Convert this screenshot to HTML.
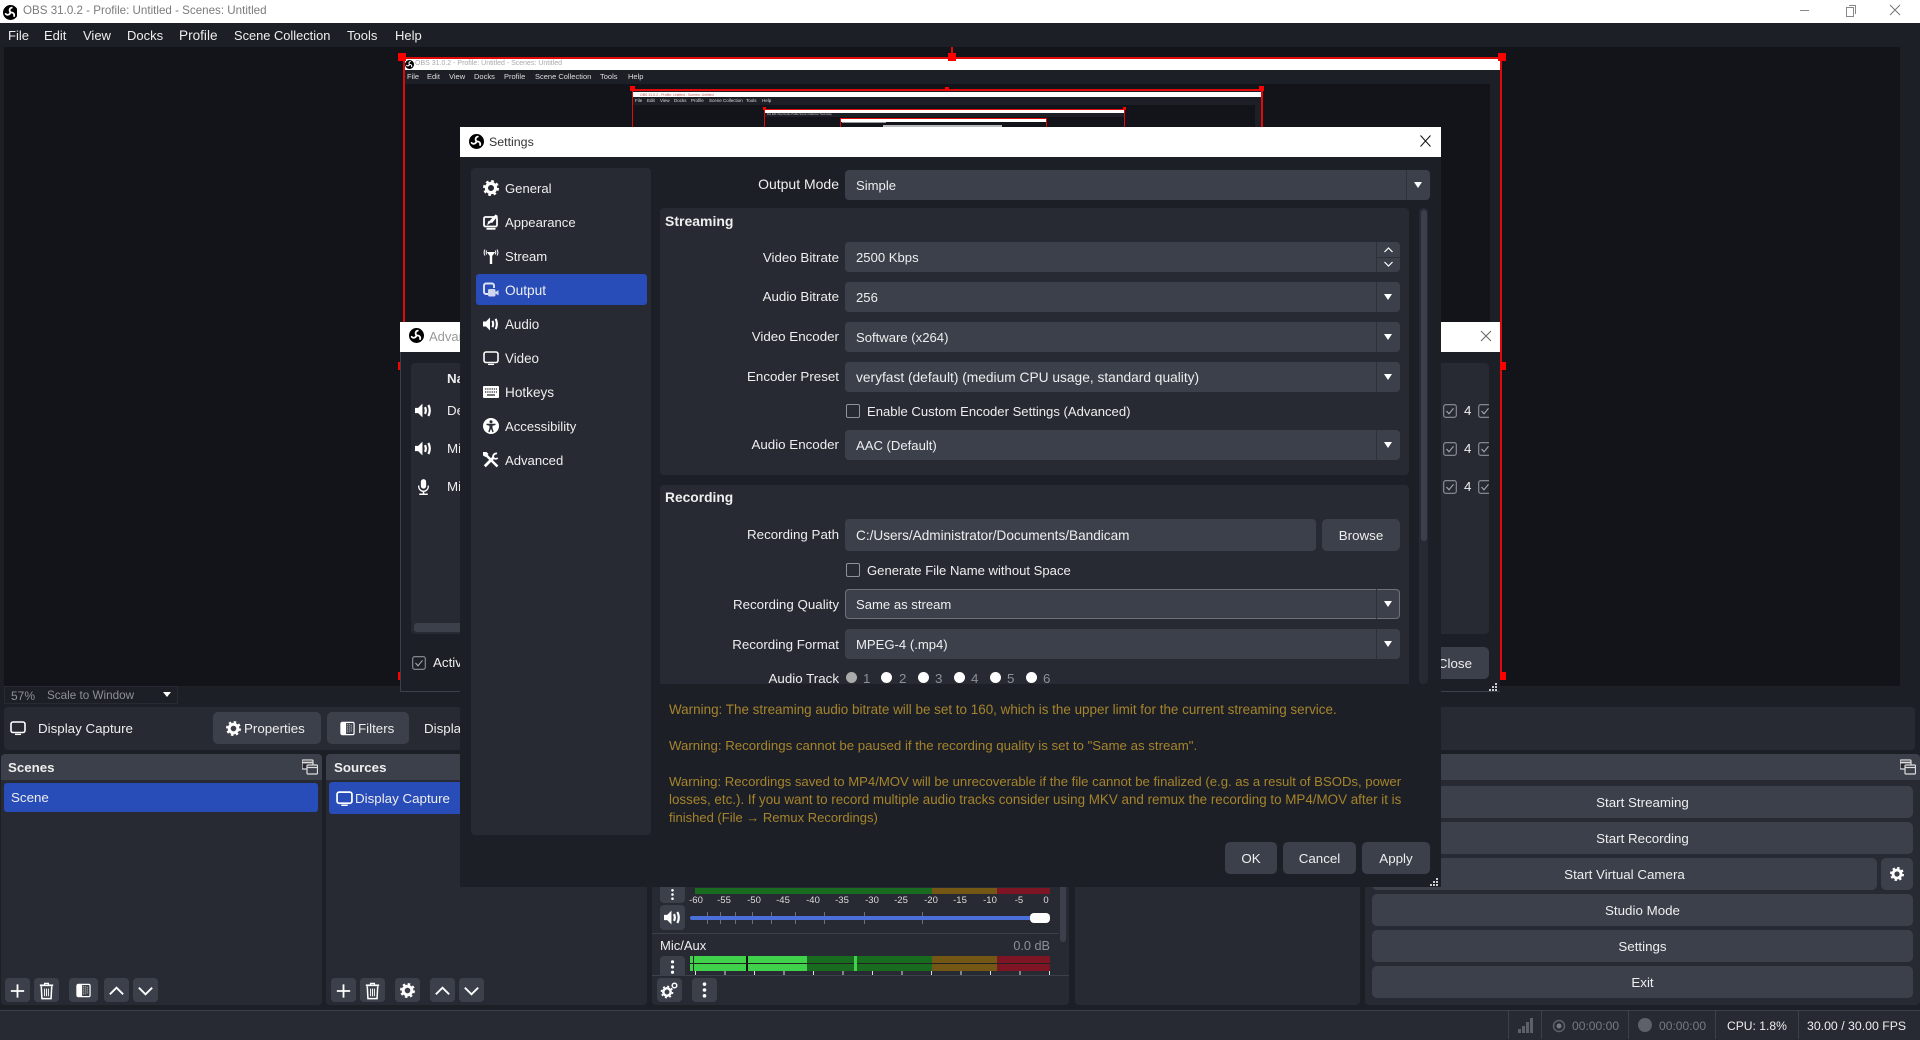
<!DOCTYPE html>
<html><head><meta charset="utf-8"><title>OBS</title>
<style>
html,body{margin:0;padding:0;width:1920px;height:1039px;overflow:hidden;background:#1d1f26;font-family:"Liberation Sans",sans-serif;font-size:13.35px;color:#eee}
div,span,svg{position:absolute}
.t{position:absolute;white-space:nowrap;line-height:18px;height:18px}
.r{text-align:right;right:1081px;margin-top:1px}
.b{font-weight:bold}
.p{background:#272a33;border-radius:4px}
.btn{background:#3c404b;border-radius:5px;text-align:center;line-height:33px;height:32px;white-space:nowrap}
.c{background:#3c404b;border-radius:4px;height:30px;left:845px;width:555px;line-height:30px;font-size:13.1px}
.c span{left:11px;top:1px;white-space:nowrap}
.c b{position:absolute;right:0;top:0;bottom:0;width:23px;border-left:1px solid #2e313a}
.c b:after{content:"";position:absolute;left:7px;top:12px;border-left:4.5px solid transparent;border-right:4.5px solid transparent;border-top:6px solid #fff}
.ck{width:12px;height:12px;border:1.5px solid #8f929a;border-radius:2px}
.ib{background:#3c404b;border-radius:4px;width:25px;height:24px;top:978px}
.ib svg{left:3px;top:3px}
.hd{background:#3c404b;border-radius:4px 4px 0 0;height:26px;top:754px}
.red{background:#e00a0a}
.h{background:#ff0000;width:8px;height:8px}
.w{background:#fff}
.sb{top:1010px;width:1px;height:29px;background:#3c404b}
.g{color:#8e9096}
.w1{color:#a5842c;margin-top:1px}
.tk{font-size:9.5px;line-height:10px;height:10px;color:#ddd;transform:translateX(-50%);top:896px;white-space:nowrap}
.tl{width:1px;height:12px;top:912px;background:#6c6f78}
.m{font-size:13px}
.li{font-size:13.1px;margin-top:1px}
.st{font-size:12.1px;margin-top:1px}
.cl{font-size:13.1px;margin-top:1px}
</style></head>
<body>
<svg width="0" height="0" style="position:absolute">
<defs>
<symbol id="logo" viewBox="0 0 16 16"><circle cx="8" cy="8" r="8" fill="#000"/><g fill="none" stroke="#fff" stroke-width="1.900" stroke-linecap="round"><path d="M8 7.800C6.400 6.200 6.800 3.300 9.400 2.800"/><path d="M8 7.800C6.400 6.200 6.800 3.300 9.400 2.800" transform="rotate(120 8 8)"/><path d="M8 7.800C6.400 6.200 6.800 3.300 9.400 2.800" transform="rotate(240 8 8)"/></g></symbol>
<symbol id="gear" viewBox="0 0 16 16"><circle cx="8" cy="8" r="4.6" fill="none" stroke="#fff" stroke-width="3.2"/><circle cx="8" cy="8" r="6.9" fill="none" stroke="#fff" stroke-width="2.2" stroke-dasharray="2.7 2.72"/></symbol>
<symbol id="mon" viewBox="0 0 16 16"><rect x="1" y="2" width="14" height="10.5" rx="2" fill="none" stroke="#fff" stroke-width="1.6"/><path d="M5 14.400h6" stroke="#fff" stroke-width="1.3"/></symbol>
<symbol id="app" viewBox="0 0 16 16"><rect x="1" y="3" width="13" height="9.5" rx="1.5" fill="none" stroke="#fff" stroke-width="1.8"/><path d="M4 11.200l1.500-4.500 3 1.500z" fill="#fff"/><path d="M6 7.500L12.500.5l2.500 1.500L9 9z" fill="#fff"/><path d="M3.500 14.800h9" stroke="#fff" stroke-width="1.8"/></symbol>
<symbol id="ant" viewBox="0 0 16 16"><path d="M3.800 4h8.400L9.200 8V16H6.800V8z" fill="#fff"/><path d="M2 1.500Q.2 4.500 2 7.500M3.700 2.500Q2.700 4.500 3.700 6.500M14 1.500Q15.800 4.500 14 7.500M12.300 2.500Q13.300 4.500 12.300 6.500" fill="none" stroke="#fff" stroke-width="1"/></symbol>
<symbol id="out" viewBox="0 0 16 16"><path d="M6 12H3a2 2 0 0 1-2-2V3.500a2 2 0 0 1 2-2h6a2 2 0 0 1 2 2V6" fill="none" stroke="#dfe4f5" stroke-width="1.900"/><rect x="5" y="7" width="7.500" height="7.500" rx="1.500" fill="#cfd6ee"/><path d="M12.500 10l3-2v5.500l-3-2z" fill="#cfd6ee"/></symbol>
<symbol id="spk" viewBox="0 0 16 16"><path d="M0 5.500h3L7 1.500v13L3 10.500H0z" fill="#fff"/><path d="M9.400 4.800Q11 8 9.400 11.200M12.600 2.800Q15.200 8 12.600 13.200" fill="none" stroke="#fff" stroke-width="2.100"/></symbol>
<symbol id="key" viewBox="0 0 16 16"><rect x="0" y="2" width="16" height="12" rx="1" fill="#fff"/><path d="M2 5h12M2 8h12" stroke="#282a33" stroke-width="1.200" stroke-dasharray="1.300 .9"/><path d="M4 11h8" stroke="#282a33" stroke-width="1.300"/></symbol>
<symbol id="acc" viewBox="0 0 16 16"><circle cx="8" cy="8" r="8" fill="#fff"/><circle cx="8" cy="3.800" r="1.500" fill="#282a33"/><path d="M3.500 5.800h9v1.200l-3 .8v2.200l1.200 3.800-1.200.4L8 10.800l-1.500 3.400-1.200-.4 1.200-3.800V7.800l-3-.8z" fill="#282a33"/></symbol>
<symbol id="tool" viewBox="0 0 16 16"><g fill="none" stroke="#fff"><path d="M1.500 1.500L14.500 14.500" stroke-width="2.600"/><path d="M1.800 14.200L10.500 5.500" stroke-width="2.800"/><path d="M10.300 5.700a3.200 3.200 0 0 1 3.700-4.200M10.300 5.700a3.200 3.200 0 0 0 4.400 .4" stroke-width="1.800"/></g><path d="M0 0h3.500l2 2-3 3-2.500-1.500z" fill="#fff"/></symbol>
<symbol id="mic" viewBox="0 0 16 16"><rect x="5.500" y="1" width="5" height="9" rx="2.500" fill="#fff"/><path d="M3.500 7v1a4.500 4.500 0 0 0 9 0V7" fill="none" stroke="#fff" stroke-width="1.200"/><path d="M8 12.500V15M4 15.300h8" stroke="#fff" stroke-width="1.400"/></symbol>
<symbol id="flt" viewBox="0 0 16 16"><rect x="0" y="1" width="11" height="9" rx="1" fill="#282a33" stroke="#ddd" stroke-width="1.200"/><path d="M0 3.500h11" stroke="#ddd" stroke-width="1.800"/><rect x="5" y="6" width="10.500" height="9" rx="1" fill="#3c404b" stroke="#ddd" stroke-width="1.200"/><path d="M5 8.500h10.500" stroke="#ddd" stroke-width="1.200"/></symbol>
<symbol id="filt" viewBox="0 0 16 16"><rect x="1" y="1.500" width="14" height="13" rx="1.500" fill="none" stroke="#fff" stroke-width="1.300"/><rect x="1.500" y="2" width="5" height="12" fill="#fff"/><path d="M8 3v10M10 3v10M12 4v8" stroke="#bbb" stroke-width="1.200" stroke-dasharray="1 1"/></symbol>
<symbol id="trash" viewBox="0 0 20 20"><path d="M3 4h14" stroke="#fff" stroke-width="1.800"/><path d="M8 3.500V2h4v1.500" stroke="#fff" stroke-width="1.300" fill="none"/><path d="M4.500 5l.7 13h9.600l.7-13" fill="none" stroke="#fff" stroke-width="1.600"/><path d="M8 7.500v8M10 7.500v8M12 7.500v8" stroke="#fff" stroke-width="1"/></symbol>
<symbol id="plus" viewBox="0 0 20 20"><path d="M10 3v14M3 10h14" stroke="#fff" stroke-width="1.900"/></symbol>
<symbol id="up" viewBox="0 0 20 20"><path d="M3 13.500l7-7 7 7" fill="none" stroke="#fff" stroke-width="1.900"/></symbol>
<symbol id="dn" viewBox="0 0 20 20"><path d="M3 6.500l7 7 7-7" fill="none" stroke="#fff" stroke-width="1.900"/></symbol>
<symbol id="dots" viewBox="0 0 20 20"><circle cx="10" cy="3.500" r="2" fill="#fff"/><circle cx="10" cy="10" r="2" fill="#fff"/><circle cx="10" cy="16.500" r="2" fill="#fff"/></symbol>
<symbol id="chk" viewBox="0 0 14 14"><rect x=".7" y=".7" width="12.600" height="12.600" rx="2" fill="none" stroke="#8f929a" stroke-width="1.100"/><path d="M3.500 7l2.500 2.800 4.500-5.500" fill="none" stroke="#a8aaaf" stroke-width="1.100"/></symbol>
</defs></svg>

<!-- title bar -->
<div class="w" style="left:0;top:0;width:1920px;height:23px"></div>
<svg style="left:3px;top:3px" width="14" height="18"><use href="#logo" width="15" height="15" y="2"/></svg>
<div class="t" style="left:23px;top:2px;font-size:11.6px;color:#7b7b7b">OBS 31.0.2 - Profile: Untitled - Scenes: Untitled</div>
<div style="left:1800px;top:10px;width:9px;height:1px;background:#888"></div>
<div style="left:1846px;top:7px;width:6px;height:8px;border:1px solid #888"></div>
<div style="left:1849px;top:5px;width:6px;height:8px;border-top:1px solid #888;border-right:1px solid #888"></div>
<svg style="left:1889px;top:4px" width="12" height="12"><path d="M1 1l10 10M11 1L1 11" stroke="#777" stroke-width="1"/></svg>

<!-- menu -->
<div class="t m" style="left:8px;top:27px;">File</div>
<div class="t m" style="left:44px;top:27px;">Edit</div>
<div class="t m" style="left:83px;top:27px;">View</div>
<div class="t m" style="left:127px;top:27px;">Docks</div>
<div class="t m" style="left:179px;top:27px;font-size:13.6px">Profile</div>
<div class="t m" style="left:234px;top:27px;font-size:12.85px">Scene Collection</div>
<div class="t m" style="left:347px;top:27px;">Tools</div>
<div class="t m" style="left:395px;top:27px;">Help</div>

<!-- preview -->
<div style="left:4px;top:47px;width:1896px;height:639px;background:#131419"></div>
<!-- nested 1 -->
<div style="left:404px;top:59px;width:1097px;height:270px;background:#1d1f26"></div>
<div class="w" style="left:404px;top:59px;width:1097px;height:11px"></div>
<svg style="left:405px;top:60px" width="9" height="9"><use href="#logo" width="9" height="9"/></svg>
<div class="t" style="left:415px;top:55px;font-size:7px;color:#aaa">OBS 31.0.2 - Profile: Untitled - Scenes: Untitled</div>
<div class="t" style="left:407px;top:68px;font-size:7.5px;color:#ddd">File</div>
<div class="t" style="left:427px;top:68px;font-size:7.5px;color:#ddd">Edit</div>
<div class="t" style="left:449px;top:68px;font-size:7.5px;color:#ddd">View</div>
<div class="t" style="left:474px;top:68px;font-size:7.5px;color:#ddd">Docks</div>
<div class="t" style="left:504px;top:68px;font-size:7.5px;color:#ddd">Profile</div>
<div class="t" style="left:535px;top:68px;font-size:7.5px;color:#ddd">Scene Collection</div>
<div class="t" style="left:600px;top:68px;font-size:7.5px;color:#ddd">Tools</div>
<div class="t" style="left:628px;top:68px;font-size:7.5px;color:#ddd">Help</div>
<div style="left:404px;top:84px;width:1086px;height:250px;background:#131419"></div>
<!-- nested 2 -->
<div style="left:633px;top:91px;width:629px;height:40px;background:#1d1f26"></div>
<div class="w" style="left:633px;top:92px;width:629px;height:5px"></div>
<div style="left:633px;top:105px;width:622px;height:30px;background:#131419"></div>
<div class="t" style="left:640px;top:86px;font-size:3.5px;color:#b55">OBS 31.0.2 - Profile: Untitled - Scenes: Untitled</div>
<div class="t" style="left:635px;top:92px;font-size:4.5px;color:#ddd">File</div>
<div class="t" style="left:647px;top:92px;font-size:4.5px;color:#ddd">Edit</div>
<div class="t" style="left:660px;top:92px;font-size:4.5px;color:#ddd">View</div>
<div class="t" style="left:674px;top:92px;font-size:4.5px;color:#ddd">Docks</div>
<div class="t" style="left:691px;top:92px;font-size:4.5px;color:#ddd">Profile</div>
<div class="t" style="left:709px;top:92px;font-size:4.5px;color:#ddd">Scene Collection</div>
<div class="t" style="left:746px;top:92px;font-size:4.5px;color:#ddd">Tools</div>
<div class="t" style="left:762px;top:92px;font-size:4.5px;color:#ddd">Help</div>
<div class="red" style="left:633px;top:89px;width:630px;height:2px"></div>
<div class="red" style="left:632px;top:89px;width:1px;height:40px"></div>
<div class="red" style="left:1261px;top:89px;width:2px;height:40px"></div>
<div class="h" style="left:630px;top:86px;width:5px;height:5px"></div>
<div class="h" style="left:1259px;top:86px;width:5px;height:5px"></div>
<div class="h" style="left:945px;top:87px;width:4px;height:4px"></div>
<!-- nested 3 -->
<div class="w" style="left:765px;top:110px;width:360px;height:3px"></div>
<div style="left:765px;top:113px;width:360px;height:4px;background:#1d1f26"></div>
<div class="t" style="left:767px;top:106px;font-size:2.6px;color:#ccc">File Edit View Docks Profile Scene Collection Tools Help</div>
<div class="red" style="left:765px;top:109px;width:360px;height:1px"></div>
<div class="red" style="left:764px;top:109px;width:1px;height:20px"></div>
<div class="red" style="left:1124px;top:109px;width:1px;height:20px"></div>
<div class="h" style="left:763px;top:107px;width:3px;height:3px"></div>
<div class="h" style="left:1123px;top:107px;width:3px;height:3px"></div>
<!-- nested 4/5 -->
<div class="w" style="left:840px;top:119px;width:207px;height:3px"></div>
<div class="red" style="left:840px;top:118px;width:207px;height:1px"></div>
<div class="red" style="left:840px;top:118px;width:1px;height:10px"></div>
<div class="red" style="left:1046px;top:118px;width:1px;height:10px"></div>
<div style="left:842px;top:122px;width:44px;height:1px;background:#999"></div>
<div style="left:883px;top:125px;width:119px;height:2px;background:#bbb"></div>
<!-- red frame -->
<div class="red" style="left:403px;top:57px;width:1099px;height:2px"></div>
<div class="red" style="left:403px;top:57px;width:2px;height:620px"></div>
<div class="red" style="left:1500px;top:57px;width:2px;height:620px"></div>
<div class="red" style="left:403px;top:675px;width:1099px;height:2px"></div>
<div class="red" style="left:951px;top:47px;width:2px;height:8px"></div>
<div class="h" style="left:398px;top:53px"></div>
<div class="h" style="left:948px;top:53px"></div>
<div class="h" style="left:1498px;top:53px"></div>
<div class="h" style="left:398px;top:362px"></div>
<div class="h" style="left:1498px;top:362px"></div>
<div class="h" style="left:398px;top:672px"></div>
<div class="h" style="left:1498px;top:672px"></div>

<!-- preview bottom bar -->
<div style="left:4px;top:686px;width:172px;height:16px;border:1px solid #272a33;border-left:1px solid #272a33"></div>
<div class="t g" style="left:11px;top:687px;font-size:12px">57%</div>
<div class="t g" style="left:47px;top:687px;font-size:11.7px">Scale to Window</div>
<div style="left:163px;top:692px;border-left:4.500px solid transparent;border-right:4.500px solid transparent;border-top:5px solid #fff"></div>

<!-- context bar -->
<div class="p" style="left:4px;top:707px;width:1911px;height:43px"></div>
<svg style="left:10px;top:720px" width="16" height="16"><use href="#mon"/></svg>
<div class="t" style="left:38px;top:720px">Display Capture</div>
<div class="btn" style="left:213px;top:712px;width:108px"></div>
<svg style="left:226px;top:721px" width="15" height="15"><use href="#gear"/></svg>
<div class="t" style="left:244px;top:720px">Properties</div>
<div class="btn" style="left:327px;top:712px;width:82px"></div>
<svg style="left:340px;top:721px" width="15" height="15"><use href="#filt"/></svg>
<div class="t" style="left:358px;top:720px">Filters</div>
<div class="t" style="left:424px;top:720px">Display</div>

<!-- docks -->
<div class="p" style="left:1px;top:754px;width:321px;height:251px"></div>
<div class="hd" style="left:1px;width:321px"></div>
<div class="t b" style="left:8px;top:759px;font-size:13.3px">Scenes</div>
<svg style="left:302px;top:759px" width="16" height="16"><use href="#flt"/></svg>
<div style="left:4px;top:783px;width:314px;height:29px;background:#284cb8;border-radius:3px"></div>
<div class="t" style="left:11px;top:789px">Scene</div>
<div class="ib" style="left:5px"><svg width="19" height="20"><use href="#plus"/></svg></div>
<div class="ib" style="left:34px"><svg width="19" height="20"><use href="#trash"/></svg></div>
<div class="ib" style="left:69px;width:29px"><svg style="left:7px;top:5px" width="15" height="15"><use href="#filt"/></svg></div>
<div class="ib" style="left:104px"><svg width="19" height="20"><use href="#up"/></svg></div>
<div class="ib" style="left:133px"><svg width="19" height="20"><use href="#dn"/></svg></div>

<div class="p" style="left:326px;top:754px;width:321px;height:251px"></div>
<div class="hd" style="left:326px;width:321px"></div>
<div class="t b" style="left:334px;top:759px;font-size:13.3px">Sources</div>
<div style="left:329px;top:782px;width:315px;height:32px;background:#284cb8;border-radius:3px"></div>
<svg style="left:336px;top:790px" width="17" height="17"><use href="#mon"/></svg>
<div class="t" style="left:355px;top:790px">Display Capture</div>
<div class="ib" style="left:331px"><svg width="19" height="20"><use href="#plus"/></svg></div>
<div class="ib" style="left:360px"><svg width="19" height="20"><use href="#trash"/></svg></div>
<div class="ib" style="left:395px"><svg style="left:5px;top:5px" width="15" height="15"><use href="#gear"/></svg></div>
<div class="ib" style="left:430px"><svg width="19" height="20"><use href="#up"/></svg></div>
<div class="ib" style="left:459px"><svg width="19" height="20"><use href="#dn"/></svg></div>

<!-- mixer -->
<div class="p" style="left:652px;top:754px;width:417px;height:251px"></div>
<div class="ib" style="left:660px;top:880px;height:23px"><svg style="top:8px" width="19" height="13"><use href="#dots" width="19" height="13"/></svg></div>
<div style="left:695px;top:888px;width:237px;height:6px;background:#196c1f"></div>
<div style="left:932px;top:888px;width:65px;height:6px;background:#745714"></div>
<div style="left:997px;top:888px;width:53px;height:6px;background:#7d1525"></div>
<div class="tk t" style="left:696px">-60</div><div class="tk t" style="left:724px">-55</div><div class="tk t" style="left:754px">-50</div><div class="tk t" style="left:783px">-45</div><div class="tk t" style="left:813px">-40</div><div class="tk t" style="left:842px">-35</div><div class="tk t" style="left:872px">-30</div><div class="tk t" style="left:901px">-25</div><div class="tk t" style="left:931px">-20</div><div class="tk t" style="left:960px">-15</div><div class="tk t" style="left:990px">-10</div><div class="tk t" style="left:1019px">-5</div><div class="tk t" style="left:1046px">0</div>
<div class="ib" style="left:660px;top:905px;height:25px"><svg style="left:4px;top:4px" width="17" height="17"><use href="#spk"/></svg></div>
<div class="tl" style="left:707px"></div><div class="tl" style="left:720px"></div><div class="tl" style="left:735px"></div><div class="tl" style="left:752px"></div><div class="tl" style="left:771px"></div><div class="tl" style="left:795px"></div><div class="tl" style="left:824px"></div><div class="tl" style="left:864px"></div><div class="tl" style="left:922px"></div>
<div style="left:690px;top:916px;width:345px;height:4px;background:#4b6fd8;border-radius:2px"></div>
<div style="left:1030px;top:913px;width:20px;height:10px;background:#fff;border-radius:4px"></div>
<div style="left:652px;top:933px;width:407px;height:1px;background:#3c404b"></div>
<div class="t" style="left:660px;top:937px;font-size:13px">Mic/Aux</div>
<div class="t g" style="right:870px;top:937px;font-size:12.7px">0.0 dB</div>
<div class="ib" style="left:660px;top:956px;height:19px;border-radius:4px 4px 0 0"><svg style="left:3px;top:3px" width="19" height="16"><use href="#dots" width="19" height="16"/></svg></div>
<div style="left:690px;top:956px;width:117px;height:15px;background:#3fd24a"></div>
<div style="left:807px;top:956px;width:125px;height:15px;background:#196c1f"></div>
<div style="left:932px;top:956px;width:65px;height:15px;background:#745714"></div>
<div style="left:997px;top:956px;width:53px;height:15px;background:#7d1525"></div>
<div style="left:690px;top:963px;width:360px;height:1px;background:#222"></div>
<div style="left:693px;top:956px;width:1px;height:15px;background:#222"></div>
<div style="left:746px;top:956px;width:2px;height:15px;background:#111"></div>
<div style="left:854px;top:956px;width:3px;height:15px;background:#3fd24a"></div>
<div style="left:695px;top:971px;width:355px;height:4px;background:repeating-linear-gradient(90deg,#ddd 0,#ddd 1px,transparent 1px,transparent 29.500px)"></div>
<div style="left:1060px;top:880px;width:6px;height:62px;background:#3c404b;border-radius:3px"></div>
<div style="left:652px;top:975px;width:417px;height:1px;background:#3c404b"></div>
<div class="ib" style="left:657px"><svg style="left:3px;top:3px" width="19" height="18" viewBox="0 0 19 18"><circle cx="7" cy="11" r="3.700" fill="none" stroke="#fff" stroke-width="2.500"/><circle cx="7" cy="11" r="5.600" fill="none" stroke="#fff" stroke-width="1.500" stroke-dasharray="2 2.400"/><circle cx="14.500" cy="4.500" r="2.300" fill="none" stroke="#fff" stroke-width="1.500"/></svg></div>
<div class="ib" style="left:692px"><svg style="left:3px;top:3px" width="19" height="18"><use href="#dots" width="19" height="18"/></svg></div>

<!-- transitions -->
<div class="p" style="left:1075px;top:754px;width:285px;height:251px"></div>
<div class="hd" style="left:1075px;width:285px"></div>

<!-- controls -->
<div class="p" style="left:1365px;top:754px;width:555px;height:251px"></div>
<div class="hd" style="left:1365px;width:555px"></div>
<svg style="left:1900px;top:759px" width="16" height="16"><use href="#flt"/></svg>
<div class="btn" style="left:1372px;top:786px;width:541px">Start Streaming</div>
<div class="btn" style="left:1372px;top:822px;width:541px">Start Recording</div>
<div class="btn" style="left:1372px;top:858px;width:505px">Start Virtual Camera</div>
<div class="btn" style="left:1881px;top:858px;width:32px"><svg style="left:9px;top:9px" width="14" height="14"><use href="#gear"/></svg></div>
<div class="btn" style="left:1372px;top:894px;width:541px">Studio Mode</div>
<div class="btn" style="left:1372px;top:930px;width:541px">Settings</div>
<div class="btn" style="left:1372px;top:966px;width:541px">Exit</div>

<!-- status bar -->
<div style="left:0;top:1010px;width:1920px;height:29px;background:#272a33;border-top:1px solid #3c404b"></div>
<div class="sb" style="left:1508px"></div><div class="sb" style="left:1541px"></div><div class="sb" style="left:1628px"></div><div class="sb" style="left:1715px"></div><div class="sb" style="left:1798px"></div>
<svg style="left:1517px;top:1018px" width="16" height="15"><path d="M1 11h3v4H1zM5 8h3v7H5zM9 4h3v11H9zM13 0h3v15h-3z" fill="#5d6068"/></svg>
<svg style="left:1552px;top:1019px" width="14" height="14"><circle cx="7" cy="7" r="2.500" fill="#767a83"/><circle cx="7" cy="7" r="5.500" fill="none" stroke="#5d6068" stroke-width="1.500"/></svg>
<div class="t st" style="left:1572px;top:1016px;color:#777a82">00:00:00</div>
<div style="left:1638px;top:1018px;width:14px;height:14px;border-radius:7px;background:#5e616b"></div>
<div class="t st" style="left:1659px;top:1016px;color:#777a82">00:00:00</div>
<div class="t st" style="left:1727px;top:1016px">CPU: 1.8%</div>
<div class="t st" style="left:1807px;top:1016px;font-size:12.3px">30.00 / 30.00 FPS</div>

<!-- advanced audio dialog -->
<div style="left:400px;top:322px;width:1100px;height:370px;background:#1d1f26;border-left:1px solid #3c404b;border-bottom:1px solid #3c404b;box-sizing:border-box"></div>
<div class="w" style="left:400px;top:322px;width:1100px;height:30px"></div>
<svg style="left:409px;top:328px" width="15" height="15"><use href="#logo"/></svg>
<div class="t" style="left:429px;top:328px;color:#999;font-size:13px">Advanced Audio Properties</div>
<svg style="left:1480px;top:330px" width="12" height="12"><path d="M1 1l10 10M11 1L1 11" stroke="#666" stroke-width="1"/></svg>
<div class="p" style="left:411px;top:363px;width:1078px;height:271px"></div>
<div class="t b" style="left:447px;top:370px">Name</div>
<svg style="left:415px;top:402px" width="17" height="17"><use href="#spk"/></svg>
<div class="t" style="left:447px;top:402px">Desktop Audio</div>
<svg style="left:415px;top:440px" width="17" height="17"><use href="#spk"/></svg>
<div class="t" style="left:447px;top:440px">Mic/Aux</div>
<svg style="left:415px;top:478px" width="17" height="17"><use href="#mic"/></svg>
<div class="t" style="left:447px;top:478px">Mic/Aux</div>
<div style="left:414px;top:623px;width:100px;height:9px;background:#3c404b;border-radius:3px"></div>
<svg style="left:412px;top:656px" width="14" height="14"><use href="#chk"/></svg>
<div class="t" style="left:433px;top:654px">Active Sources Only</div>
<svg style="left:1443px;top:404px" width="14" height="14"><use href="#chk"/></svg>
<svg style="left:1443px;top:442px" width="14" height="14"><use href="#chk"/></svg>
<svg style="left:1443px;top:480px" width="14" height="14"><use href="#chk"/></svg>
<div class="t" style="left:1464px;top:402px">4</div>
<div class="t" style="left:1464px;top:440px">4</div>
<div class="t" style="left:1464px;top:478px">4</div>
<svg style="left:1478px;top:404px" width="11" height="14"><use href="#chk" width="14" height="14"/></svg>
<svg style="left:1478px;top:442px" width="11" height="14"><use href="#chk" width="14" height="14"/></svg>
<svg style="left:1478px;top:480px" width="11" height="14"><use href="#chk" width="14" height="14"/></svg>
<div class="btn" style="left:1400px;top:647px;width:89px;text-align:right"><span style="right:17px;top:0">Close</span></div>
<svg style="left:1488px;top:683px" width="9" height="9"><path d="M7 0h2v2H7zM4 3h2v2H4zM7 3h2v2H7zM1 6h2v2H1zM4 6h2v2H4zM7 6h2v2H7z" fill="#ccc"/></svg>

<!-- settings dialog -->
<div style="left:460px;top:127px;width:981px;height:760px;background:#1d1f26"></div>
<div class="w" style="left:460px;top:127px;width:981px;height:30px"></div>
<svg style="left:469px;top:134px" width="15" height="15"><use href="#logo"/></svg>
<div class="t" style="left:489px;top:133px;font-size:12.4px;color:#333">Settings</div>
<svg style="left:1420px;top:135px" width="11" height="12"><path d="M.5.5l10 11M10.500.5l-10 11" stroke="#111" stroke-width="1"/></svg>

<div class="p" style="left:471px;top:168px;width:180px;height:667px"></div>
<div style="left:476px;top:274px;width:171px;height:31px;background:#284cb8;border-radius:3px"></div>
<svg style="left:483px;top:180px" width="16" height="16"><use href="#gear"/></svg><div class="t li" style="left:505px;top:179px">General</div>
<svg style="left:483px;top:214px" width="16" height="16"><use href="#app"/></svg><div class="t li" style="left:505px;top:213px">Appearance</div>
<svg style="left:483px;top:248px" width="16" height="16"><use href="#ant"/></svg><div class="t li" style="left:505px;top:247px">Stream</div>
<svg style="left:483px;top:282px" width="16" height="16"><use href="#out"/></svg><div class="t li" style="left:505px;top:281px;font-size:13.7px">Output</div>
<svg style="left:483px;top:316px" width="16" height="16"><use href="#spk"/></svg><div class="t li" style="left:505px;top:315px;font-size:13.4px">Audio</div>
<svg style="left:483px;top:350px" width="16" height="16"><use href="#mon"/></svg><div class="t li" style="left:505px;top:349px;font-size:13.4px">Video</div>
<svg style="left:483px;top:384px" width="16" height="16"><use href="#key"/></svg><div class="t li" style="left:505px;top:383px;font-size:13.6px">Hotkeys</div>
<svg style="left:483px;top:418px" width="16" height="16"><use href="#acc"/></svg><div class="t li" style="left:505px;top:417px">Accessibility</div>
<svg style="left:483px;top:452px" width="16" height="16"><use href="#tool"/></svg><div class="t li" style="left:505px;top:451px">Advanced</div>

<div class="t r" style="top:174px;font-size:14px">Output Mode</div>
<div class="c" style="top:170px;width:585px"><span>Simple</span><b></b></div>

<div class="p" style="left:660px;top:208px;width:749px;height:267px"></div>
<div class="t b" style="left:665px;top:212px;font-size:14px">Streaming</div>
<div class="t r" style="top:248px">Video Bitrate</div>
<div class="c" style="top:242px"><span>2500 Kbps</span><i style="position:absolute;right:0;top:0;bottom:0;width:23px;border-left:1px solid #2e313a"></i><i style="position:absolute;right:0;top:15px;width:23px;height:1px;background:#2e313a"></i>
<svg style="right:6px;top:4px" width="11" height="8"><path d="M1.500 6L5.500 2l4 4" fill="none" stroke="#fff" stroke-width="1.200"/></svg><svg style="right:6px;top:18px" width="11" height="8"><path d="M1.500 2l4 4 4-4" fill="none" stroke="#fff" stroke-width="1.200"/></svg></div>
<div class="t r" style="top:287px">Audio Bitrate</div>
<div class="c" style="top:282px"><span>256</span><b></b></div>
<div class="t r" style="top:327px">Video Encoder</div>
<div class="c" style="top:322px"><span>Software (x264)</span><b></b></div>
<div class="t r" style="top:367px">Encoder Preset</div>
<div class="c" style="top:362px"><span style="font-size:13.75px">veryfast (default) (medium CPU usage, standard quality)</span><b></b></div>
<div class="ck" style="left:846px;top:404px"></div>
<div class="t cl" style="left:867px;top:402px">Enable Custom Encoder Settings (Advanced)</div>
<div class="t r" style="top:435px">Audio Encoder</div>
<div class="c" style="top:430px"><span>AAC (Default)</span><b></b></div>

<div style="left:1419px;top:208px;width:9px;height:476px;background:#272a33;border-radius:4px"></div>
<div style="left:1421px;top:210px;width:6px;height:331px;background:#3c404b;border-radius:3px"></div>

<div class="p" style="left:660px;top:485px;width:749px;height:199px;border-radius:4px 4px 0 0"></div>
<div class="t b" style="left:665px;top:489px;font-size:13.8px">Recording</div>
<div class="t r" style="top:525px">Recording Path</div>
<div class="c" style="top:519px;width:471px;height:32px;line-height:32px"><span style="font-size:13.6px">C:/Users/Administrator/Documents/Bandicam</span></div>
<div class="btn" style="left:1322px;top:519px;width:78px">Browse</div>
<div class="ck" style="left:846px;top:563px"></div>
<div class="t cl" style="left:867px;top:561px">Generate File Name without Space</div>
<div class="t r" style="top:595px">Recording Quality</div>
<div class="c" style="top:589px;box-shadow:inset 0 0 0 1px #6e717b"><span>Same as stream</span><b></b></div>
<div class="t r" style="top:635px">Recording Format</div>
<div class="c" style="top:629px"><span>MPEG-4 (.mp4)</span><b></b></div>
<div class="t r" style="top:669px">Audio Track</div>
<div style="left:846px;top:672px;width:11px;height:11px;border-radius:6px;background:#aaa"></div>
<div style="left:881px;top:672px;width:11px;height:11px;border-radius:6px;background:#fff"></div>
<div style="left:918px;top:672px;width:11px;height:11px;border-radius:6px;background:#fff"></div>
<div style="left:954px;top:672px;width:11px;height:11px;border-radius:6px;background:#fff"></div>
<div style="left:990px;top:672px;width:11px;height:11px;border-radius:6px;background:#fff"></div>
<div style="left:1026px;top:672px;width:11px;height:11px;border-radius:6px;background:#fff"></div>
<div class="t g" style="left:863px;top:670px">1</div>
<div class="t g" style="left:899px;top:670px">2</div>
<div class="t g" style="left:935px;top:670px">3</div>
<div class="t g" style="left:971px;top:670px">4</div>
<div class="t g" style="left:1007px;top:670px">5</div>
<div class="t g" style="left:1043px;top:670px">6</div>

<div style="left:652px;top:684px;width:789px;height:203px;background:#1d1f26"></div>
<div class="t w1" style="left:669px;top:700px;font-size:13.44px">Warning: The streaming audio bitrate will be set to 160, which is the upper limit for the current streaming service.</div>
<div class="t w1" style="left:669px;top:736px;font-size:13.26px">Warning: Recordings cannot be paused if the recording quality is set to "Same as stream".</div>
<div class="t w1" style="left:669px;top:772px;font-size:13.15px">Warning: Recordings saved to MP4/MOV will be unrecoverable if the file cannot be finalized (e.g. as a result of BSODs, power</div>
<div class="t w1" style="left:669px;top:790px;font-size:13.4px">losses, etc.). If you want to record multiple audio tracks consider using MKV and remux the recording to MP4/MOV after it is</div>
<div class="t w1" style="left:669px;top:808px;font-size:13px">finished (File → Remux Recordings)</div>
<div class="btn" style="left:1225px;top:842px;width:52px">OK</div>
<div class="btn" style="left:1283px;top:842px;width:73px">Cancel</div>
<div class="btn" style="left:1362px;top:842px;width:68px">Apply</div>
<svg style="left:1429px;top:878px" width="9" height="9"><path d="M7 0h2v2H7zM4 3h2v2H4zM7 3h2v2H7zM1 6h2v2H1zM4 6h2v2H4zM7 6h2v2H7z" fill="#ccc"/></svg>
</body></html>
